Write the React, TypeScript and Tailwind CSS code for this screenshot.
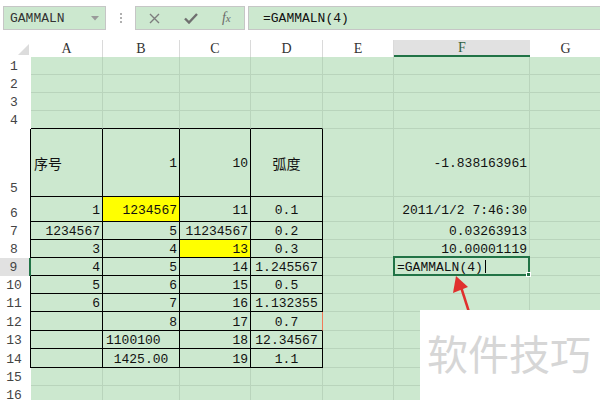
import React from "react";

type Cell = {
  t?: string;
  a?: "l" | "r" | "c";
  y?: boolean;
};

const rowsData: Record<number, (Cell | null)[]> = {
  5: [{ t: "序号", a: "l" }, { t: "1" }, { t: "10" }, { t: "弧度", a: "c" }, null, { t: "-1.838163961" }, null],
  6: [{ t: "1" }, { t: "1234567", y: true }, { t: "11" }, { t: "0.1", a: "c" }, null, { t: "2011/1/2 7:46:30" }, null],
  7: [{ t: "1234567" }, { t: "5" }, { t: "11234567" }, { t: "0.2", a: "c" }, null, { t: "0.03263913" }, null],
  8: [{ t: "3" }, { t: "4" }, { t: "13", y: true }, { t: "0.3", a: "c" }, null, { t: "10.00001119" }, null],
  9: [{ t: "4" }, { t: "5" }, { t: "14" }, { t: "1.245567", a: "c" }, null, null, null],
  10: [{ t: "5" }, { t: "6" }, { t: "15" }, { t: "0.5", a: "c" }, null, null, null],
  11: [{ t: "6" }, { t: "7" }, { t: "16" }, { t: "1.132355", a: "c" }, null, null, null],
  12: [null, { t: "8" }, { t: "17" }, { t: "0.7", a: "c" }, null, null, null],
  13: [null, { t: "1100100", a: "l" }, { t: "18" }, { t: "12.34567", a: "c" }, null, null, null],
  14: [null, { t: "1425.00", a: "c" }, { t: "19" }, { t: "1.1", a: "c" }, null, null, null],
};

const cols = ["A", "B", "C", "D", "E", "F", "G"];

function DataCell({ r, c }: { r: number; c: number }) {
  const data = rowsData[r]?.[c] ?? null;
  const inTable = r >= 5 && r <= 14 && c <= 3;
  const row4Table = r === 4 && c <= 3;
  let border = "border-r border-b border-[#b9d4bc]";
  if (inTable) border = "border-r border-b border-black";
  else if (row4Table) border = "border-r border-b border-r-[#b9d4bc] border-b-black";
  if (r === 12 && c === 3) border = "border-r border-b border-b-black border-r-[#f07a5a]";
  const bg = data?.y ? "bg-[#ffff00]" : "bg-[#cce8cf]";
  const align =
    data?.a === "l" ? "justify-start pl-[3px]" : data?.a === "c" ? "justify-center" : "justify-end pr-[2px]";
  const isCJK = data?.t === "序号" || data?.t === "弧度";
  return (
    <div className={`relative flex items-center ${align} ${border} ${bg} overflow-visible`}>
      {data?.t ? (
        <span
          className={
            isCJK
              ? "text-[14px] leading-none text-[#111] font-['Noto_Sans_CJK_SC',sans-serif]"
              : "text-[13px] leading-none text-[#111] whitespace-nowrap pt-[2px]"
          }
        >
          {data.t}
        </span>
      ) : null}
      {r === 9 && c === 5 ? (
        <div className="absolute -left-[1px] -top-[2px] w-[137px] h-[20px] border-2 border-[#217346] flex items-center pl-[2px] z-10">
          <span className="text-[13px] leading-none text-[#111] pt-[2px]">=GAMMALN(4)</span>
          <span className="ml-[2px] w-px h-[13px] bg-black"></span>
          <span className="absolute -right-[3px] -bottom-[3px] w-[5px] h-[5px] bg-[#217346] border border-white"></span>
        </div>
      ) : null}
    </div>
  );
}

export default function App() {
  const rows = Array.from({ length: 16 }, (_, i) => i + 1);
  return (
    <div className="relative w-[600px] h-[400px] overflow-hidden bg-white font-['Liberation_Mono',monospace] text-[#222]">
      {/* toolbar */}
      <div className="h-[40px] flex items-start pt-[6px]">
        <div className="ml-[3px] w-[103px] h-[24px] border border-[#c6c6c6] bg-[#cce8cf] flex items-center justify-between pl-[6px] pr-[6px]">
          <span className="text-[13px] leading-none text-[#333]">GAMMALN</span>
          <svg width="8" height="5" viewBox="0 0 8 5">
            <path d="M0 0 L8 0 L4 4.5 Z" fill="#9a9a9a" />
          </svg>
        </div>
        <div className="w-[29px] h-[24px] flex flex-col items-center justify-center gap-[2px]">
          <span className="w-[2px] h-[2px] bg-[#b0b0b0]"></span>
          <span className="w-[2px] h-[2px] bg-[#b0b0b0]"></span>
          <span className="w-[2px] h-[2px] bg-[#b0b0b0]"></span>
        </div>
        <div className="w-[110px] h-[24px] border border-[#c6c6c6] bg-[#cce8cf] flex items-center">
          <div className="w-[36px] flex justify-center ml-[1px]">
            <svg width="11" height="11" viewBox="0 0 11 11">
              <path d="M1 1 L10 10 M10 1 L1 10" stroke="#7d7d7d" strokeWidth="1.4" />
            </svg>
          </div>
          <div className="w-[37px] flex justify-center">
            <svg width="14" height="11" viewBox="0 0 14 11">
              <path d="M1 5.5 L5 9.5 L13 1" stroke="#6f6f6f" strokeWidth="2.4" fill="none" />
            </svg>
          </div>
          <div className="w-[36px] flex justify-center">
            <span className="font-['Liberation_Serif',serif] italic text-[14px] leading-none text-[#6a6a6a]">
              f<span className="text-[11px]">x</span>
            </span>
          </div>
        </div>
        <div className="ml-[3px] flex-1 h-[24px] border border-r-0 border-[#c6c6c6] bg-[#cce8cf] flex items-center pl-[14px]">
          <span className="text-[13px] leading-none text-[#111]">=GAMMALN(4)</span>
        </div>
      </div>

      {/* sheet */}
      <div className="grid grid-cols-[31px_72px_77px_71px_72px_71px_136px_72px] grid-rows-[17px_18px_18px_18px_18px_68px_25px_18px_18px_18px_18px_18px_19px_18px_19px_18px_18px]">
        <div className="bg-white flex items-end justify-end pr-[2px] pb-[2px]">
          <svg width="11" height="11" viewBox="0 0 11 11">
            <path d="M11 0 L11 11 L0 11 Z" fill="#dcdcdc" />
          </svg>
        </div>
        {cols.map((c) =>
          c === "F" ? (
            <div
              key={c}
              className="bg-[#e1e1e1] border-b-2 border-[#217346] flex items-center justify-center font-['Liberation_Serif',serif] text-[14px] leading-none text-[#2f5f3f] pt-[1px]"
            >
              {c}
            </div>
          ) : (
            <div
              key={c}
              className="bg-white border-r border-[#dadada] flex items-center justify-center font-['Liberation_Serif',serif] text-[14px] leading-none text-[#333] pt-[1px]"
            >
              {c}
            </div>
          )
        )}
        {rows.map((r) => (
          <React.Fragment key={r}>
            {r === 9 ? (
              <div className="bg-[#e1e1e1] border-r-2 border-[#217346] flex items-end justify-center pr-[2px] pb-[2px] text-[13px] leading-none text-[#444]">
                {r}
              </div>
            ) : r >= 5 && r <= 14 ? (
              <div className="bg-white border-r border-black flex items-end justify-center pr-[2px] pb-[2px] text-[13px] leading-none text-[#444]">
                {r}
              </div>
            ) : (
              <div className="bg-white flex items-end justify-center pr-[3px] pb-[2px] text-[13px] leading-none text-[#444]">
                {r}
              </div>
            )}
            {cols.map((_, ci) => (
              <DataCell key={ci} r={r} c={ci} />
            ))}
          </React.Fragment>
        ))}
      </div>

      {/* arrow annotation */}
      <svg className="absolute left-0 top-0 pointer-events-none z-20" width="600" height="400" viewBox="0 0 600 400">
        <line x1="469" y1="312" x2="461" y2="287" stroke="#e0302e" strokeWidth="2.5" />
        <polygon points="456,276 453,293 468,287" fill="#e0302e" />
      </svg>

      {/* watermark */}
      <div className="absolute left-[420px] top-[310px] w-[180px] h-[90px] bg-white z-20 pl-[7px] pt-[22px]">
        <span className="font-['Noto_Sans_CJK_SC',sans-serif] text-[41px] leading-none text-[#d6d6d6] whitespace-nowrap">
          软件技巧
        </span>
      </div>
    </div>
  );
}
